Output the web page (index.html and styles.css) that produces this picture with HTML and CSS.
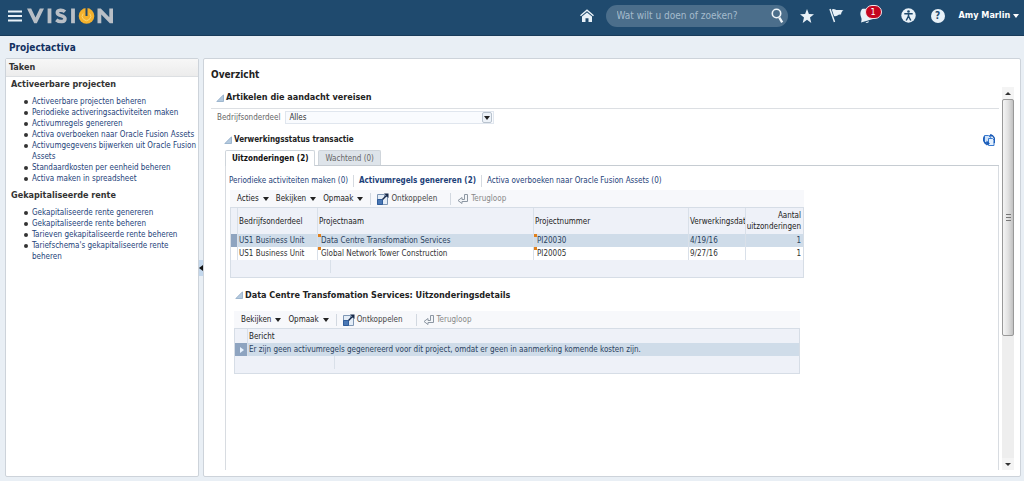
FILE: index.html
```html
<!DOCTYPE html>
<html lang="nl">
<head>
<meta charset="utf-8">
<title>Projectactiva</title>
<meta name="viewport" content="width=device-width, initial-scale=1">
<link rel="stylesheet" href="styles.css">
</head>
<body>
<svg class="sprite" aria-hidden="true">
  <symbol id="i-detach" viewBox="0 0 12 12"><path d="M.5 1.500h7v2h3v8H.5z" fill="#e4edf7" stroke="#7f97b5"/><path d="M.5 6.500h5v5h-5z" fill="#4a78b5" stroke="#2f5c9b"/><path d="M5.500 6.500 9.500 2.500" stroke="#16294a" stroke-width="1.400" fill="none"/><path d="M7 .5h4.500V5z" fill="#16294a"/></symbol>
  <symbol id="i-wrap" viewBox="0 0 12 12"><path d="M7.500 1.500h3v7H5v2L1 7.500l4-3v2h2.500z" fill="#f4f6f9" stroke="#8d97a3"/></symbol>
  <symbol id="i-disclose" viewBox="0 0 8 8"><path d="M7.500.8v6.700H.8z" fill="#b4cadf" stroke="#8fabc6" stroke-width=".8"/></symbol>
</svg>

<header class="topbar">
  <button class="icon-btn" aria-label="Menu"><svg width="14" height="12" viewBox="0 0 14 12"><path d="M0 1.500h14M0 6h14M0 10.500h14" stroke="#e8f1f8" stroke-width="2"/></svg></button>
  <div class="logo" role="img" aria-label="Vision"><svg width="88" height="16" viewBox="0 0 88 16" fill="none" stroke="#b9bfc6" stroke-width="3.800">
    <path d="M0 .5h4.200L8.500 9.500 12.800.5H17L9.800 15.300H7.200z" fill="#b9bfc6" stroke="none"/>
    <path d="M22.500.5v14.800M46 .5v14.800"/>
    <path d="M38 3.800C35.500 1.500 30.300 1.600 30.300 4.700c0 3.700 7.700 2.200 7.700 6 0 3.500-5.500 3.800-8.800 1.100" stroke-width="3.500"/>
    <circle cx="59.500" cy="7.900" r="7.800" fill="#f5b12c" stroke="none"/>
    <path d="M56.200 5.500a4.300 4.300 0 1 0 6.600 0" stroke="#fbd774" stroke-width="1"/>
    <path d="M59.500 0v8" stroke="#23486a" stroke-width="2"/>
    <path d="M70.500 15.300V.5h3.300l8.500 8.700V.5H86v14.800h-3.200l-8.500-8.800v8.800z" fill="#b9bfc6" stroke="none"/>
  </svg></div>
  <nav class="tools" aria-label="Algemeen">
    <button class="icon-btn home" aria-label="Start"><svg width="14" height="14" viewBox="0 0 14 14"><path d="M.5 6.800 7 1.200l6.500 5.600" fill="none" stroke="#e8f1f8" stroke-width="1.400"/><path d="M2 7.600 7 3.400l5 4.200V13H8.500V9.200h-3V13H2z" fill="#e8f1f8"/></svg></button>
    <form class="search" role="search">
      <input type="text" aria-label="Zoeken" placeholder="Wat wilt u doen of zoeken?">
      <button type="button" class="icon-btn" aria-label="Zoek"><svg width="13" height="16" viewBox="0 0 13 16" fill="none" stroke="#f0f6fa"><circle cx="5.500" cy="5.500" r="4.200" stroke-width="1.600"/><path d="m8.300 9.500 2.900 4.800" stroke-width="2.400"/></svg></button>
    </form>
    <button class="icon-btn star" aria-label="Favorieten"><svg width="14" height="14" viewBox="0 0 14 14"><path d="m7 0 1.900 4.900 5.100.3-4 3.200L11.300 14 7 10.700 2.700 14 4 8.400 0 5.200l5.100-.3z" fill="#e8f1f8"/></svg></button>
    <button class="icon-btn flag" aria-label="Volglijst"><svg width="15" height="15" viewBox="0 0 15 15"><path d="m1 1 4.500 13" stroke="#e8f1f8" stroke-width="1.500"/><path d="M2.800 1.600C5-.2 6.500 2.200 8.500 2c2-.1 3-.3 6 .4-2 1-2.200 2.500-2.500 4.200C9 5.600 7.500 9.500 5 8z" fill="#e8f1f8"/></svg></button>
    <button class="icon-btn bell" aria-label="Meldingen"><svg width="16" height="16" viewBox="0 0 16 16"><path d="M2 1c4-1 8 1 8.500 5 .2 2.500.6 4 2.500 5L1 14.500c.8-2.500.8-3.500 0-5.500C0 6.500 0 3.500 2 1z" fill="#e8f1f8"/><path d="M5.500 14.200a2 2 0 0 0 3.500-1z" fill="#e8f1f8"/></svg><span class="badge">1</span></button>
    <button class="icon-btn access" aria-label="Toegankelijkheid"><svg width="15" height="15" viewBox="0 0 15 15"><circle cx="7.500" cy="7.500" r="7.200" fill="#e8f1f8"/><circle cx="7.500" cy="3.500" r="1.300" fill="#1f4a6e"/><path d="M3.300 5.800h8.400M7.500 5.500v3.500M7.300 8.500 5.200 12.500M7.700 8.500l2.100 4" stroke="#1f4a6e" stroke-width="1.500" fill="none"/></svg></button>
    <button class="icon-btn" aria-label="Help"><span class="help">?</span></button>
    <button class="user">Amy Marlin <i class="caret"></i></button>
  </nav>
</header>

<h1 class="page-title">Projectactiva</h1>

<div class="workspace">
  <aside class="panel tasks">
    <h2>Taken</h2>
    <h3>Activeerbare projecten</h3>
    <ul>
      <li><a href="#">Activeerbare projecten beheren</a></li>
      <li><a href="#">Periodieke activeringsactiviteiten maken</a></li>
      <li><a href="#">Activumregels genereren</a></li>
      <li><a href="#">Activa overboeken naar Oracle Fusion Assets</a></li>
      <li><a href="#">Activumgegevens bijwerken uit Oracle Fusion Assets</a></li>
      <li><a href="#">Standaardkosten per eenheid beheren</a></li>
      <li><a href="#">Activa maken in spreadsheet</a></li>
    </ul>
    <h3>Gekapitaliseerde rente</h3>
    <ul>
      <li><a href="#">Gekapitaliseerde rente genereren</a></li>
      <li><a href="#">Gekapitaliseerde rente beheren</a></li>
      <li><a href="#">Tarieven gekapitaliseerde rente beheren</a></li>
      <li><a href="#">Tariefschema's gekapitaliseerde rente beheren</a></li>
    </ul>
  </aside>
  <div class="splitter"><button aria-label="Deelvenster samenvouwen"></button></div>

  <main class="panel overview">
    <h2>Overzicht</h2>
    <div class="scroll-area">
      <div class="content">
        <h3 class="section-title"><svg width="8" height="8"><use href="#i-disclose"/></svg>Artikelen die aandacht vereisen</h3>
        <div class="filter">
          <label for="unit">Bedrijfsonderdeel</label>
          <div class="select-wrap"><select id="unit"><option>Alles</option></select><i class="drop"></i></div>
        </div>
        <div class="status-head">
          <h4><svg width="8" height="8"><use href="#i-disclose"/></svg>Verwerkingsstatus transactie</h4>
          <button class="icon-btn" aria-label="Vernieuwen"><svg width="12" height="12" viewBox="0 0 12 12"><path d="M1.500 1.500h4l2 2v5h-6z" fill="#cfe3fa" stroke="#3a7bd0"/><path d="M5.500 4.500h4l1.500 1.500v5.500H5.500z" fill="#e4f0fd" stroke="#3a7bd0"/><path d="M4.500 10.500C.5 9.500-.2 5 1.500 2.500M7 1c4 .2 5.300 4 4.300 8" fill="none" stroke="#1c5db8" stroke-width="1.400"/><path d="m3.500 6.500 3.500 3-3.500 2zM8.500 0v3.500L6 1.500z" fill="#1c5db8"/></svg></button>
        </div>
        <div class="tabs" role="tablist">
          <button class="tab active" role="tab" aria-selected="true">Uitzonderingen (2)</button>
          <button class="tab" role="tab" aria-selected="false">Wachtend (0)</button>
        </div>
        <div class="tab-body">
          <nav class="sublinks" aria-label="Uitzonderingen">
            <a href="#">Periodieke activiteiten maken (0)</a>
            <a href="#" class="current">Activumregels genereren (2)</a>
            <a href="#">Activa overboeken naar Oracle Fusion Assets (0)</a>
          </nav>

          <section class="grid-block">
            <div class="toolbar">
              <button>Acties <i class="caret"></i></button>
              <button>Bekijken <i class="caret"></i></button>
              <button>Opmaak <i class="caret"></i></button>
              <button class="sep"><svg width="12" height="12"><use href="#i-detach"/></svg>Ontkoppelen</button>
              <button class="sep" disabled><svg width="12" height="12"><use href="#i-wrap"/></svg>Terugloop</button>
            </div>
            <table class="grid">
              <colgroup><col class="c-sel"><col class="c-unit"><col><col class="c-num"><col class="c-date"><col class="c-count"></colgroup>
              <thead><tr><th></th><th>Bedrijfsonderdeel</th><th>Projectnaam</th><th>Projectnummer</th><th>Verwerkingsdatum</th><th class="right">Aantal uitzonderingen</th></tr></thead>
              <tbody>
                <tr class="selected"><td></td><td>US1 Business Unit</td><td class="mark">Data Centre Transfomation Services</td><td class="mark">PI20030</td><td>4/19/16</td><td class="right">1</td></tr>
                <tr><td></td><td>US1 Business Unit</td><td class="mark">Global Network Tower Construction</td><td class="mark">PI20005</td><td>9/27/16</td><td class="right">1</td></tr>
              </tbody>
            </table>
            <div class="grid-foot"></div>
          </section>

          <h4 class="detail-title"><svg width="8" height="8"><use href="#i-disclose"/></svg>Data Centre Transfomation Services: Uitzonderingsdetails</h4>

          <section class="grid-block detail">
            <div class="toolbar">
              <button>Bekijken <i class="caret"></i></button>
              <button>Opmaak <i class="caret"></i></button>
              <button class="sep"><svg width="12" height="12"><use href="#i-detach"/></svg>Ontkoppelen</button>
              <button class="sep" disabled><svg width="12" height="12"><use href="#i-wrap"/></svg>Terugloop</button>
            </div>
            <table class="grid">
              <colgroup><col class="c-row"><col></colgroup>
              <thead><tr><th></th><th>Bericht</th></tr></thead>
              <tbody><tr class="selected"><td><i class="row-arrow"></i></td><td>Er zijn geen activumregels gegenereerd voor dit project, omdat er geen in aanmerking komende kosten zijn.</td></tr></tbody>
            </table>
            <div class="grid-foot"></div>
          </section>
        </div>
      </div>
      <div class="scrollbar" aria-hidden="true">
        <span class="arrow up"></span>
        <div class="track"><div class="thumb"></div></div>
        <span class="arrow down"></span>
      </div>
    </div>
  </main>
</div>
</body>
</html>
```
FILE: styles.css
```css
* { box-sizing: border-box; }
body {
  margin: 0;
  min-height: 100vh;
  display: flex;
  flex-direction: column;
  background: #e9eff5;
  color: #333;
  font-family: "DejaVu Sans Condensed", "DejaVu Sans", sans-serif;
  font-size: 8px;
  line-height: 11px;
}
h1, h2, h3, h4, ul { margin: 0; padding: 0; }
button, input, select { font: inherit; color: inherit; margin: 0; padding: 0; border: 0; background: none; }
a { color: #1d4279; text-decoration: none; }
svg { display: block; flex: none; }
.sprite { position: absolute; width: 0; height: 0; }
.icon-btn { display: flex; }
.caret {
  display: inline-block;
  border: 3px solid transparent;
  border-top: 4px solid currentColor;
  border-bottom: 0;
}

/* Top bar */
.topbar {
  display: flex;
  align-items: center;
  height: 36px;
  padding: 0 5px 4px 8px;
  background: #1f4a6e;
  border-bottom: 1px solid #183b5a;
}
.logo { margin-left: 5px; }
.tools { display: flex; align-items: center; margin-left: auto; color: #fff; }
.search {
  display: flex;
  align-items: center;
  width: 182px;
  height: 22px;
  margin: 0 12px;
  padding: 0 4px 0 11px;
  border-radius: 11px;
  background: #4b6e8b;
}
.search input { flex: 1; min-width: 0; font-size: 10px; outline: 0; }
.search input::placeholder { color: #a5bccd; opacity: 1; }
.star { margin-right: 15px; }
.flag { margin-right: 16px; }
.bell { position: relative; margin-right: 25px; }
.badge {
  position: absolute;
  left: 5px;
  top: -3px;
  width: 17px;
  height: 14px;
  border: 1px solid #f4e4e8;
  border-radius: 7px;
  background: #c4051f;
  color: #fff;
  font-size: 9px;
  line-height: 12px;
  text-align: center;
}
.access { margin-right: 15px; }
.help {
  width: 14px;
  height: 14px;
  border-radius: 50%;
  background: #e8f1f8;
  color: #1f4a6e;
  font-size: 10px;
  font-weight: bold;
  line-height: 14px;
}
.user { margin-left: 14px; font-size: 9px; font-weight: bold; white-space: nowrap; }

.page-title { padding: 5px 9px 3px; font-size: 10px; line-height: 14px; color: #12305f; }

/* Panels */
.workspace { flex: 1; display: flex; padding: 0 3px 4px 5px; }
.panel { background: #fff; border: 1px solid #cdd3da; border-radius: 2px; }
.tasks { width: 194px; flex: none; }
.tasks h2 {
  padding: 2px 3px;
  border-bottom: 1px solid #dcdfe2;
  background: linear-gradient(#f7f7f7, #ececec);
  font-size: 9px;
  line-height: 13px;
}
.tasks h3 { padding: 2px 5px; font-size: 9px; line-height: 11px; }
.tasks ul { padding: 4px 0 4px 26px; list-style: none; }
.tasks li { position: relative; line-height: 11px; }
.tasks li::before {
  content: "";
  position: absolute;
  left: -8px;
  top: 4px;
  width: 4px;
  height: 4px;
  border-radius: 50%;
  background: #333;
}
.splitter { width: 4px; flex: none; display: flex; align-items: center; }
.splitter button { width: 5px; height: 16px; background: #c3d7ec; display: flex; align-items: center; }
.splitter button::before { content: ""; border: 3px solid transparent; border-right: 4px solid #111; border-left: 0; }

.overview { flex: 1; min-width: 0; display: flex; flex-direction: column; padding: 9px 6px 6px 7px; }
.overview h2 { font-size: 10px; line-height: 14px; color: #222; }
.scroll-area { flex: 1; display: flex; margin-top: 5px; }
.content { flex: 1; min-width: 0; display: flex; flex-direction: column; }
h3.section-title, h4 { display: flex; align-items: center; gap: 2px; color: #222; }
.section-title { padding: 4px 5px; border-bottom: 1px solid #dcdfe3; font-size: 9px; line-height: 13px; }

.filter { display: flex; align-items: center; gap: 5px; padding: 2px 6px; color: #666; }
.select-wrap { position: relative; width: 209px; }
.select-wrap select {
  display: block;
  width: 100%;
  height: 13px;
  padding-left: 3px;
  appearance: none;
  border: 1px solid #e0e6ee;
  background: #f9fbfe;
  color: #333;
}
.drop {
  position: absolute;
  right: 2px;
  top: 1px;
  width: 10px;
  height: 11px;
  border: 1px solid #b9c3ce;
  border-radius: 2px;
  background: #edf2f8;
  display: flex;
  align-items: center;
  justify-content: center;
  pointer-events: none;
}
.drop::before { content: ""; border: 3px solid transparent; border-top: 4px solid #222; border-bottom: 0; }

.status-head { display: flex; align-items: center; justify-content: space-between; padding: 8px 4px 4px 13px; }
.status-head h4 { font-size: 8px; line-height: 12px; }
.tabs { display: flex; align-items: flex-end; gap: 3px; margin-left: 14px; border-bottom: 1px solid #c6ccd2; }
.tab {
  padding: 0 6px;
  height: 15px;
  border: 1px solid #cfd5db;
  border-bottom: 0;
  border-radius: 2px 2px 0 0;
  background: #dee4ea;
  color: #666;
  white-space: nowrap;
}
.tab.active { height: 16px; margin-bottom: -1px; background: #fff; color: #111; font-weight: bold; }
.tab-body {
  flex: 1;
  margin-left: 14px;
  padding: 9px 4px 0 3px;
  border: 1px solid #d8dce1;
  border-top: 0;
  border-bottom: 0;
}
.sublinks { display: flex; line-height: 12px; white-space: nowrap; }
.sublinks a + a { margin-left: 5px; padding-left: 5px; border-left: 1px solid #d5dae0; }
.sublinks .current { font-weight: bold; }

/* Grids */
.grid-block { width: 574px; max-width: 100%; margin: 3px 0 0 1px; }
.toolbar { display: flex; align-items: center; height: 17px; padding-left: 7px; gap: 7px; background: #f7f8fb; color: #222; }
.toolbar button { display: flex; align-items: center; gap: 4px; white-space: nowrap; }
.toolbar .sep { height: 12px; padding-left: 6px; border-left: 1px solid #d2d8e0; gap: 2px; color: #444; }
.toolbar .sep[disabled] { margin-left: 6px; color: #888; }
.grid { width: 100%; table-layout: fixed; border-collapse: separate; border-spacing: 0; border: 1px solid #d6dde6; border-bottom: 0; }
.grid th, .grid td { padding: 0 1px; overflow: hidden; white-space: nowrap; text-align: left; line-height: 11px; border-right: 1px solid #d9e0e9; }
.grid th { height: 26px; background: #eef1f8; color: #222; font-weight: normal; }
.grid td { height: 13px; }
.grid tr > :last-child { border-right: 0; }
.grid .right { padding: 0 2px 0 0; text-align: right; }
.grid th.right { white-space: normal; }
.grid .selected td { background-color: #cfdce9; color: #2b4260; }
.grid .selected td:first-child { background: #8ea4c0; }
.grid td.mark {
  padding-left: 3px;
  background-image: linear-gradient(#e0801c, #e0801c);
  background-repeat: no-repeat;
  background-size: 3px 3px;
  background-position: 0 0;
}
.c-sel { width: 7px; }
.c-unit { width: 80px; }
.c-num { width: 155px; }
.c-date { width: 57px; }
.c-count { width: 57px; }
.grid-foot { height: 18px; border: 1px solid #d6dde6; border-top: 0; background: linear-gradient(#d9e0e9, #d9e0e9) 99px 0 / 1px 13px no-repeat #eef1f8; }
.detail-title { margin: 2px 0 0 3px; padding: 9px 3px 5px; font-size: 9px; line-height: 12px; }
.detail { width: 566px; margin: 5px 0 0 5px; }
.detail .grid th { height: 14px; }
.c-row { width: 13px; }
.row-arrow { display: block; margin-left: 4px; width: 4px; border: 3px solid transparent; border-left: 4px solid #e8f3ff; border-right: 0; }

/* Scrollbar */
.scrollbar { display: flex; flex-direction: column; width: 12px; margin-left: 3px; background: #eee; }
.arrow { height: 12px; display: flex; align-items: center; justify-content: center; background: #f4f4f4; }
.arrow::before { content: ""; border: 3px solid transparent; }
.arrow.up::before { border-top: 0; border-bottom: 3px solid #333; }
.arrow.down::before { border-bottom: 0; border-top: 3px solid #333; }
.track { flex: 1; }
.thumb {
  display: flex;
  align-items: center;
  justify-content: center;
  height: 66%;
  border: 1px solid #999;
  border-radius: 2px;
  background: linear-gradient(90deg, #f5f5f5, #e2e2e2 50%, #c2c2c2);
}
.thumb::before { content: ""; width: 5px; height: 7px; background: repeating-linear-gradient(#777 0 1px, transparent 1px 3px); }
```
